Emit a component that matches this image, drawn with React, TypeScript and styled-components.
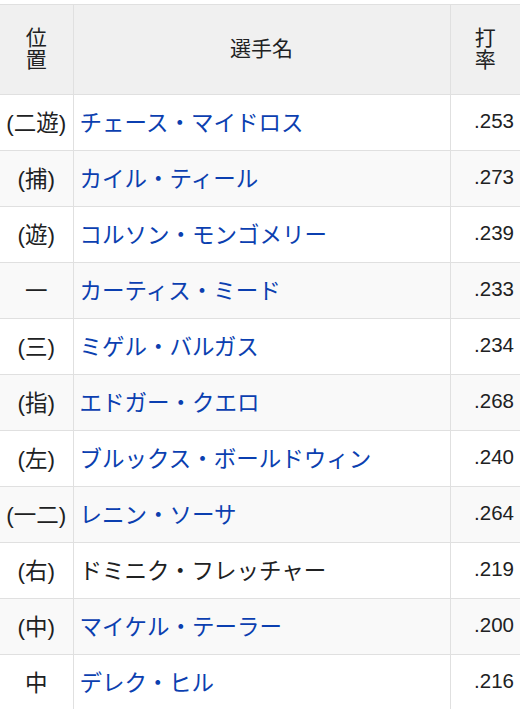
import React from 'react'
import styled, { createGlobalStyle } from 'styled-components'

const GlobalStyle = createGlobalStyle`
  html, body {
    margin: 0;
    padding: 0;
    background: #ffffff;
  }
  body {
    font-family: "Liberation Sans", Arial, "Noto Sans CJK JP", sans-serif;
    color: #202122;
    overflow: hidden;
  }
`

type Player = {
    pos: string
    name: string
    avg: string
    link?: boolean
}

const players: Player[] = [
    { pos: '(二遊)', name: 'チェース・マイドロス', avg: '.253', link: true },
    { pos: '(捕)', name: 'カイル・ティール', avg: '.273', link: true },
    { pos: '(遊)', name: 'コルソン・モンゴメリー', avg: '.239', link: true },
    { pos: '一', name: 'カーティス・ミード', avg: '.233', link: true },
    { pos: '(三)', name: 'ミゲル・バルガス', avg: '.234', link: true },
    { pos: '(指)', name: 'エドガー・クエロ', avg: '.268', link: true },
    { pos: '(左)', name: 'ブルックス・ボールドウィン', avg: '.240', link: true },
    { pos: '(一二)', name: 'レニン・ソーサ', avg: '.264', link: true },
    { pos: '(右)', name: 'ドミニク・フレッチャー', avg: '.219' },
    { pos: '(中)', name: 'マイケル・テーラー', avg: '.200', link: true },
    { pos: '中', name: 'デレク・ヒル', avg: '.216', link: true },
]

const Page = styled.div`
  padding-top: 4px;
  width: 520px;
  overflow: hidden;
`

const Table = styled.table`
  border-collapse: collapse;
  width: 520px;
  font-size: 22.5px;
  table-layout: fixed;
`

const Col = styled.col<{ $width: number }>`
  width: ${p => p.$width}px;
`

const HeadCell = styled.th`
  box-sizing: border-box;
  height: 90px;
  padding: 0 0 2px;
  background: #f0f0f0;
  font-weight: normal;
  text-align: center;
  font-size: 21px;
  line-height: 22px;
  border: 1px solid #e0e0e0;
  &:first-child {
    border-left: 0;
  }
  &:last-child {
    border-right: 0;
  }
`

const Row = styled.tr<{ $striped: boolean }>`
  background: ${p => (p.$striped ? '#f9f9f9' : '#ffffff')};
`

const Cell = styled.td<{ $align: 'left' | 'center' | 'right' }>`
  box-sizing: border-box;
  height: 56px;
  padding: 0 ${p => (p.$align === 'right' ? 6 : 0)}px 4px ${p => (p.$align === 'left' ? 6 : 0)}px;
  text-align: ${p => p.$align};
  border: 1px solid #e0e0e0;
  white-space: nowrap;
  &:first-child {
    border-left: 0;
  }
  &:last-child {
    border-right: 0;
  }
`

const Name = styled.span<{ $link: boolean }>`
  color: ${p => (p.$link ? '#0b3fb0' : '#202122')};
`

const Avg = styled.span`
  font-size: 20.5px;
`

export default function App() {
    return (
        <>
            <GlobalStyle />
            <Page>
                <Table>
                    <colgroup>
                        <Col $width={73} />
                        <Col $width={377} />
                        <Col $width={70} />
                    </colgroup>
                    <thead>
                        <tr>
                            <HeadCell>位<br />置</HeadCell>
                            <HeadCell>選手名</HeadCell>
                            <HeadCell>打<br />率</HeadCell>
                        </tr>
                    </thead>
                    <tbody>
                        {players.map((p, i) => (
                            <Row key={p.name} $striped={i % 2 === 1}>
                                <Cell $align="center">{p.pos}</Cell>
                                <Cell $align="left">
                                    <Name $link={!!p.link}>{p.name}</Name>
                                </Cell>
                                <Cell $align="right">
                                    <Avg>{p.avg}</Avg>
                                </Cell>
                            </Row>
                        ))}
                    </tbody>
                </Table>
            </Page>
        </>
    )
}
